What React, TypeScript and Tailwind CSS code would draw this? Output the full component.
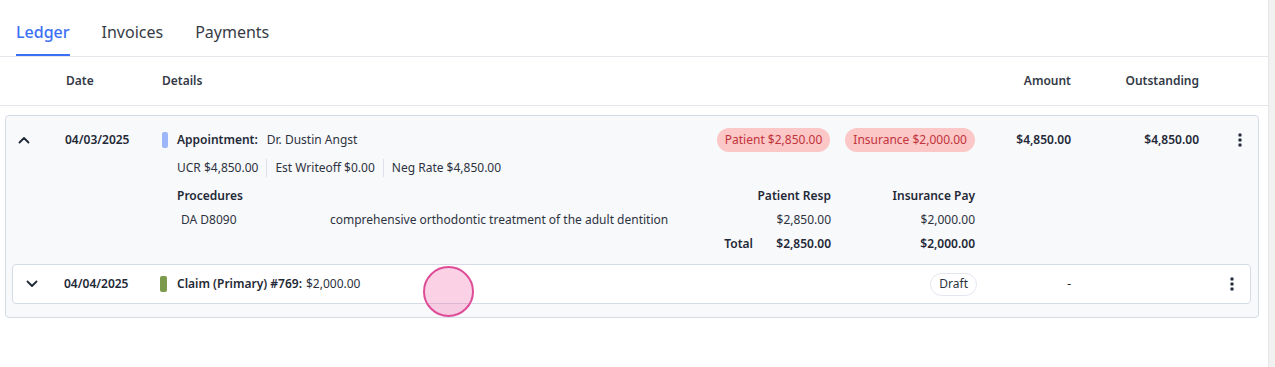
const Chevron = ({ up }: { up?: boolean }) => (
  <svg width="12" height="8" viewBox="0 0 12 8" fill="none">
    <polyline
      points={up ? "1.5,6.5 6,2 10.5,6.5" : "1.5,1.5 6,6 10.5,1.5"}
      stroke="#1f2937"
      strokeWidth="1.8"
      strokeLinecap="round"
      strokeLinejoin="round"
    />
  </svg>
);

const Kebab = () => (
  <svg width="4" height="14" viewBox="0 0 4 14">
    <rect x="0.5" y="0.5" width="3" height="3" rx="0.6" fill="#1f2937" />
    <rect x="0.5" y="5.5" width="3" height="3" rx="0.6" fill="#1f2937" />
    <rect x="0.5" y="10.5" width="3" height="3" rx="0.6" fill="#1f2937" />
  </svg>
);

const Sep = () => <span className="mx-[8px] h-[18px] w-px bg-[#dde2ea]" />;

export default function App() {
  const tabs = ["Ledger", "Invoices", "Payments"];

  return (
    <div className="flex h-[367px] w-[1275px] bg-white font-['Noto_Sans',sans-serif] text-[12px] text-[#1f2937]">
      <div className="relative flex-1">
        {/* tabs */}
        <div className="flex h-[57px] gap-[32px] border-b border-[#e4e7eb] pl-[16px]">
          {tabs.map((t, i) => (
            <div
              key={t}
              className={
                i === 0
                  ? "pt-[20px] border-b-2 border-[#3b6ff5] text-[16px] leading-[24px] font-medium text-[#3b6ff5]"
                  : "pt-[20px] text-[16px] leading-[24px] text-[#363b45]"
              }
            >
              {t}
            </div>
          ))}
        </div>

        {/* table header */}
        <div className="flex h-[49px] items-center border-b border-[#e4e7eb] pl-[6px] font-semibold text-[#333a46]">
          <div className="w-[60px]" />
          <div className="w-[96px]">Date</div>
          <div className="flex-1">Details</div>
          <div className="w-[81px] text-right">Amount</div>
          <div className="w-[128px] text-right">Outstanding</div>
          <div className="w-[60px]" />
          <div className="w-[9px]" />
        </div>

        {/* ledger card */}
        <div className="ml-[5px] mr-[9px] mt-[9px] rounded-[4px] border border-[#d6dce5] bg-[#f8f9fb] pb-[13px]">
          <div className="flex pt-[12px]">
            <div className="flex h-[24px] w-[59px] items-center pl-[12px]">
              <Chevron up />
            </div>
            <div className="flex h-[24px] w-[97px] items-center font-semibold">04/03/2025</div>
            <div className="flex-1 pr-[15px]">
              <div className="flex h-[24px] items-center justify-between">
                <div className="flex items-center">
                  <span className="h-[16px] w-[6px] rounded-[2px] bg-[#9db5f9]" />
                  <span className="ml-[9px] font-semibold">Appointment:</span>
                  <span className="ml-[9px] text-[#2d3340]">Dr. Dustin Angst</span>
                </div>
                <div className="flex items-center gap-[15px]">
                  <span className="flex h-[24px] items-center rounded-full bg-[#fbc7c7] px-[8px] text-[#c3333a]">
                    Patient $2,850.00
                  </span>
                  <span className="flex h-[24px] items-center rounded-full bg-[#fbc7c7] px-[8px] text-[#c3333a]">
                    Insurance $2,000.00
                  </span>
                </div>
              </div>
              <div className="mt-[6px] flex h-[20px] items-center pl-[15px] text-[#2d3340]">
                <span>UCR $4,850.00</span>
                <Sep />
                <span>Est Writeoff $0.00</span>
                <Sep />
                <span>Neg Rate $4,850.00</span>
              </div>
              <div className="mt-[8px] flex h-[20px] items-center pl-[15px] font-semibold">
                <div className="flex-1">Procedures</div>
                <div className="w-[110px] text-right">Patient Resp</div>
                <div className="w-[144px] text-right">Insurance Pay</div>
              </div>
              <div className="mt-[4px] flex h-[20px] items-center pl-[19px] text-[#2d3340]">
                <div className="w-[149px]">DA D8090</div>
                <div className="flex-1">comprehensive orthodontic treatment of the adult dentition</div>
                <div className="w-[110px] text-right">$2,850.00</div>
                <div className="w-[144px] text-right">$2,000.00</div>
              </div>
              <div className="mt-[4px] flex h-[20px] items-center font-semibold">
                <div className="flex-1 text-right">Total</div>
                <div className="w-[78px] text-right">$2,850.00</div>
                <div className="w-[144px] text-right">$2,000.00</div>
              </div>
            </div>
            <div className="flex h-[24px] w-[81px] items-center justify-end font-semibold">$4,850.00</div>
            <div className="flex h-[24px] w-[128px] items-center justify-end font-semibold">$4,850.00</div>
            <div className="flex h-[24px] w-[59px] items-center justify-end pr-[16px]">
              <Kebab />
            </div>
          </div>

          {/* claim row */}
          <div className="ml-[6px] mr-[7px] mt-[10px] flex h-[40px] items-center rounded-[4px] border border-[#d6dce5] bg-white">
            <div className="flex w-[51px] items-center pl-[13px]">
              <Chevron />
            </div>
            <div className="w-[96px] font-semibold">04/04/2025</div>
            <div className="flex flex-1 items-center justify-between pr-[13px]">
              <div className="flex items-center">
                <span className="h-[16px] w-[7px] rounded-[2px] bg-[#7d9a4c]" />
                <span className="ml-[10px] font-semibold">Claim (Primary) #769:</span>
                <span className="ml-[4px] text-[#2d3340]">$2,000.00</span>
              </div>
              <span className="flex h-[23px] items-center rounded-full border border-[#e2e6ee] px-[8px] text-[#2d3340]">
                Draft
              </span>
            </div>
            <div className="-mr-[2px] w-[81px] text-right">-</div>
            <div className="w-[130px]" />
            <div className="flex w-[51px] items-center justify-end pr-[16px]">
              <Kebab />
            </div>
          </div>
        </div>

        {/* click indicator */}
        <div className="absolute left-[423px] top-[266px] h-[51px] w-[51px] rounded-full border-2 border-[#de4c98] bg-[#ec489940]" />
      </div>

      {/* scrollbar */}
      <div className="w-[7px] border-l border-[#e6e6e6] bg-[#f1f1f1]" />
    </div>
  );
}
